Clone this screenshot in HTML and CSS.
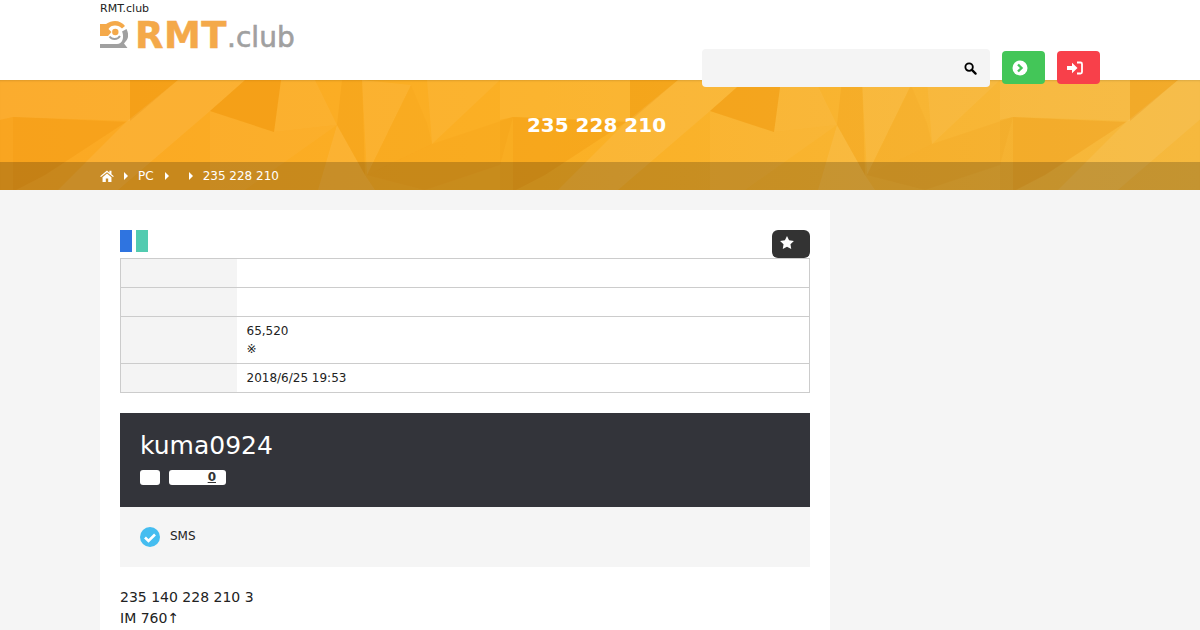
FILE: index.html
```html
<!DOCTYPE html>
<html lang="en">

<head>
  <meta charset="UTF-8">
  <title>235 228 210 | RMT.club</title>
  <link rel="stylesheet" href="styles.css">
</head>

<body>

  <header class="site-header">
    <div class="wrap header-row">
      <div class="brand">
        <p class="brand-tag">RMT.club</p>
        <a class="logo" href="#">
          <svg class="logo-mark" viewBox="0 0 28 28">
            <path fill="#f4a94a" d="M0 3h6C9 1 12 0 15 0c4 0 8 2 10 5l-3 2.500C20 5.500 18 4.500 15 4.500c-3 0-5 1-6.500 3.500l3 3-3.500 4H0z" />
            <circle cx="15.300" cy="11" r="3.200" fill="#f4a94a" />
            <path fill="#a0a0a0" d="M0 23h17c2.500 0 4.500-1.500 5.500-4 1-2.800.5-6.500-.5-8.500l4.500-2.500c2 4 2.300 8 .3 11l-2.800 3.500 3.500 4.500H0z" />
            <path d="M9.500 15.500c2.500 3.500 8 3.500 10.500-.5" fill="none" stroke="#a0a0a0" stroke-width="2" />
          </svg>
          <span class="logo-main">RMT</span><span class="logo-sub">.club</span>
        </a>
      </div>
      <div class="header-tools">
        <form class="search">
          <svg class="icon-search" viewBox="0 0 14 14">
            <circle cx="5.500" cy="5.500" r="4" fill="none" stroke="#000" stroke-width="2" />
            <path d="M8.500 8.500l4 4" stroke="#000" stroke-width="2.400" stroke-linecap="round" />
          </svg>
        </form>
        <a class="btn btn-green" href="#">
          <svg class="btn-icon" viewBox="0 0 16 16">
            <circle cx="8" cy="8" r="7.500" fill="#fff" />
            <path d="M6 4.500L9.500 8 6 11.500" fill="none" stroke="#43c658" stroke-width="2.400" />
          </svg>
        </a>
        <a class="btn btn-red" href="#">
          <svg class="btn-icon" viewBox="0 0 16 16">
            <path fill="#fff" d="M0 6h5V2.800L10.500 8 5 13.200V10H0z" />
            <path d="M10 2.500h3.500c1 0 1.500.5 1.500 1.500v8c0 1-.5 1.500-1.500 1.500H10" fill="none" stroke="#fff" stroke-width="1.800" />
          </svg>
        </a>
      </div>
    </div>
  </header>

  <section class="banner">
    <svg class="banner-bg" viewBox="0 0 1200 110" preserveAspectRatio="none">
      <defs>
        <g id="facets">
          <polygon fill="#e88a00" fill-opacity=".3" points="130,0 178,0 130,41" />
          <polygon fill="#e88a00" fill-opacity=".22" points="13,37 126,42 45,95 16,110 13,110" />
          <polygon fill="#e88a00" fill-opacity=".32" points="210,31 245,0 281,0 274,52" />
          <polygon fill="#fff" fill-opacity=".05" points="0,0 130,0 130,41 13,37 0,40" />
          <polygon fill="#fff" fill-opacity=".07" points="178,0 245,0 210,31 118,110 58,110 126,42" />
          <polygon fill="#fff" fill-opacity=".035" points="210,31 274,52 337,45 245,110 210,110" />
          <polygon fill="#fff" fill-opacity=".05" points="281,0 315,0 337,45 274,52" />
          <polygon fill="#e88a00" fill-opacity=".16" points="342,0 362,0 365,95 337,45" />
          <polygon fill="#fff" fill-opacity=".07" points="337,45 365,95 375,110 318,110" />
          <polygon fill="#fff" fill-opacity=".06" points="362,0 411,5 367,95" />
          <polygon fill="#e88a00" fill-opacity=".08" points="411,5 427,43 432,64 367,95" />
          <polygon fill="#fff" fill-opacity=".05" points="427,0 500,0 432,64" />
          <polygon fill="#e88a00" fill-opacity=".1" points="367,95 432,64 513,37 500,85 425,110" />
          <polygon fill="#e88a00" fill-opacity=".08" points="0,40 13,37 13,110 0,110" />
        </g>
      </defs>
      <use href="#facets" x="0" />
      <use href="#facets" x="500" />
      <use href="#facets" x="1000" />
    </svg>
    <div class="banner-title-row">
      <h1 class="banner-title">235 228 210</h1>
    </div>
    <nav class="crumbs">
      <div class="wrap crumbs-row">
        <svg class="icon-home" viewBox="0 0 16 14">
          <path fill="#fff" d="M8 .5L0 7.200l1 1.100L8 2.500l7 5.800 1-1.100-2.800-2.300V1h-2.400v2.200zM2.800 8.400V14h3.800V9.800h2.800V14h3.800V8.400L8 4z" />
        </svg>
        <i class="caret"></i>
        <span class="crumb">PC</span>
        <i class="caret"></i>
        <i class="caret caret-empty"></i>
        <span class="crumb">235 228 210</span>
      </div>
    </nav>
  </section>

  <main class="wrap page">
    <article class="card">
      <div class="card-top">
        <div class="swatches">
          <span class="swatch swatch-blue"></span>
          <span class="swatch swatch-teal"></span>
        </div>
        <button class="fav" type="button">
          <svg viewBox="0 0 16 15" class="fav-icon">
            <polygon fill="#fff" points="8,0 10.400,4.900 16,5.700 12,9.500 12.900,15 8,12.400 3.100,15 4,9.500 0,5.700 5.600,4.900" />
          </svg>
        </button>
      </div>

      <table class="info">
        <tr>
          <th></th>
          <td></td>
        </tr>
        <tr>
          <th></th>
          <td></td>
        </tr>
        <tr>
          <th></th>
          <td>65,520<br>※</td>
        </tr>
        <tr>
          <th></th>
          <td>2018/6/25 19:53</td>
        </tr>
      </table>

      <section class="seller">
        <h2 class="seller-name">kuma0924</h2>
        <div class="seller-badges">
          <span class="badge badge-small"></span>
          <span class="badge badge-count"><u>0</u></span>
        </div>
      </section>

      <div class="verified">
        <svg class="icon-check" viewBox="0 0 20 20">
          <circle cx="10" cy="10" r="10" fill="#45bdf0" />
          <path d="M5 10.500l3.500 3.500L15 7.500" fill="none" stroke="#fff" stroke-width="2.600" />
        </svg>
        <span class="verified-label">SMS</span>
      </div>

      <div class="body-text">
        <p>235 140 228 210 3</p>
        <p>IM 760↑</p>
      </div>
    </article>
  </main>

</body>

</html>
```

FILE: styles.css
```css
* {
  box-sizing: border-box;
}

html,
body {
  height: 630px;
  overflow: hidden;
}

body {
  margin: 0;
  font-family: "DejaVu Sans", sans-serif;
  font-size: 14px;
  color: #222;
  background-color: #f5f5f5;
}

p {
  margin: 0;
}

.wrap {
  width: 1000px;
  margin: 0 auto;
}

/* HEADER */

.site-header {
  position: relative;
  z-index: 2;
  height: 80px;
  background-color: #fff;
}

.header-row {
  display: flex;
  justify-content: space-between;
}

.brand-tag {
  padding-top: 2px;
  font-size: 11px;
  line-height: 13px;
}

.logo {
  display: flex;
  align-items: flex-end;
  height: 30px;
  margin-top: 4px;
  text-decoration: none;
  white-space: nowrap;
}

.logo-mark {
  width: 28px;
  height: 28px;
  margin: 0 7px 0 0;
}

.logo-main {
  margin-bottom: -5px;
  font-size: 37px;
  font-weight: bold;
  line-height: 36px;
  letter-spacing: .5px;
  -webkit-text-stroke: .5px #f4a94a;
  color: #f4a94a;
}

.logo-sub {
  margin-bottom: -5px;
  font-size: 28px;
  line-height: 33px;
  -webkit-text-stroke: .6px #a0a0a0;
  color: #a0a0a0;
}

.header-tools {
  display: flex;
  align-items: flex-start;
  gap: 12px;
  margin-top: 49px;
  height: 38px;
}

.search {
  display: flex;
  align-items: center;
  justify-content: flex-end;
  width: 288px;
  height: 38px;
  padding-right: 13px;
  border-radius: 4px;
  background-color: #f4f4f4;
}

.icon-search {
  width: 13px;
  height: 13px;
}

.btn {
  display: flex;
  align-items: center;
  justify-content: center;
  width: 43px;
  height: 33px;
  margin-top: 2px;
  padding-right: 8px;
  border-radius: 4px;
}

.btn-green {
  background-color: #43c658;
}

.btn-red {
  background-color: #f8404a;
}

.btn-icon {
  width: 16px;
  height: 16px;
}

/* BANNER */

.banner {
  position: relative;
  height: 110px;
  overflow: hidden;
  background: linear-gradient(90deg, #fba823 0%, #fbb024 45%, #f6b93e 100%);
  box-shadow: inset 0 2px 2px -1px rgba(0, 0, 0, .12);
}

.banner-bg {
  position: absolute;
  top: 0;
  left: 0;
  width: 100%;
  height: 100%;
}

.banner-title-row {
  position: relative;
  height: 82px;
  padding-right: 7px;
  display: flex;
  align-items: center;
  justify-content: center;
}

.banner-title {
  margin: 8px 0 0;
  font-size: 20px;
  font-weight: bold;
  color: #fff;
}

.crumbs {
  position: relative;
  height: 28px;
  background-color: rgba(0, 0, 0, .2);
}

.crumbs-row {
  display: flex;
  align-items: center;
  height: 100%;
  font-size: 12px;
  color: #fff;
}

.icon-home {
  width: 14px;
  height: 12px;
  margin-right: 10px;
}

.caret {
  width: 0;
  height: 0;
  margin-right: 10px;
  border-top: 4px solid transparent;
  border-bottom: 4px solid transparent;
  border-left: 4px solid #fff;
}

.caret-empty {
  margin-left: 10px;
}

.crumb {
  margin-right: 11px;
}

/* CARD */

.page {
  padding-top: 20px;
}

.card {
  width: 730px;
  height: 440px;
  padding: 20px;
  background-color: #fff;
}

.card-top {
  display: flex;
  justify-content: space-between;
  height: 28px;
}

.swatches {
  display: flex;
  gap: 4px;
}

.swatch {
  width: 12px;
  height: 22px;
}

.swatch-blue {
  background-color: #2f74e0;
}

.swatch-teal {
  background-color: #52cbb0;
}

.fav {
  display: flex;
  align-items: flex-start;
  justify-content: center;
  width: 38px;
  height: 28px;
  padding: 6px 8px 0 0;
  border: 0;
  border-radius: 6px;
  background-color: #333;
}

.fav-icon {
  width: 14px;
  height: 13px;
}

/* TABLE */

.info {
  width: 100%;
  border-collapse: collapse;
  font-size: 12px;
  line-height: 18px;
}

.info th,
.info td {
  height: 29px;
  padding: 5px 10px;
  border-top: 1px solid #ccc;
  border-bottom: 1px solid #ccc;
}

.info th {
  width: 116px;
  border-left: 1px solid #ccc;
  background-color: #f4f4f4;
}

.info td {
  border-right: 1px solid #ccc;
}

/* SELLER */

.seller {
  height: 94px;
  margin-top: 20px;
  padding: 20px;
  color: #fff;
  background-color: #33343a;
}

.seller-name {
  margin: 0;
  font-size: 25px;
  font-weight: normal;
  line-height: 26px;
}

.seller-badges {
  display: flex;
  gap: 9px;
  margin-top: 11px;
}

.badge {
  height: 15px;
  border-radius: 3px;
  background-color: #fff;
}

.badge-small {
  width: 20px;
}

.badge-count {
  width: 57px;
  padding-right: 10px;
  font-size: 12px;
  font-weight: bold;
  line-height: 15px;
  text-align: right;
  color: #333;
}

.verified {
  display: flex;
  align-items: center;
  gap: 10px;
  height: 60px;
  padding-left: 20px;
  font-size: 12px;
  background-color: #f5f5f5;
}

.verified-label {
  margin-top: -2px;
}

.icon-check {
  width: 20px;
  height: 20px;
}

.body-text {
  margin-top: 20px;
  line-height: 21px;
}
```
